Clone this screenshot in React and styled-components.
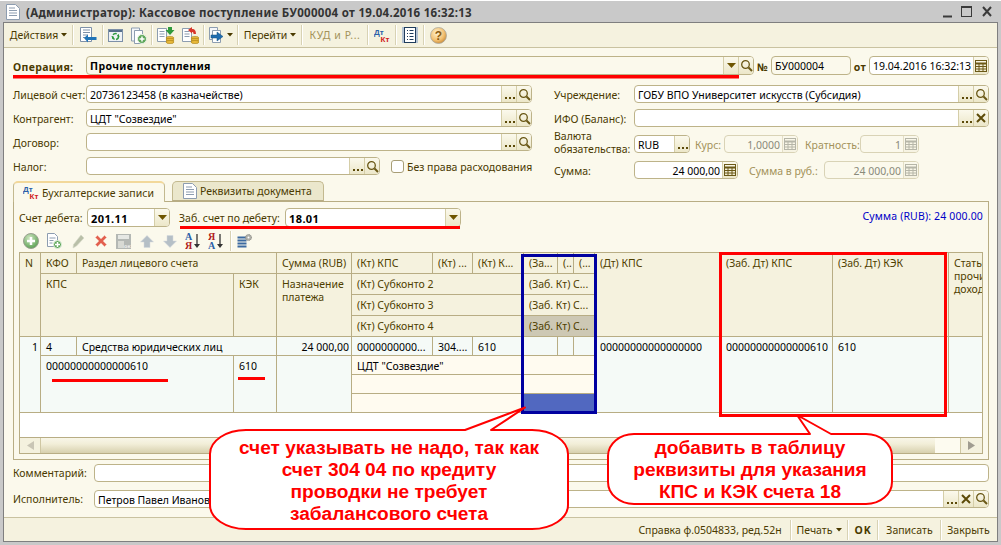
import React from 'react';
import styled, { createGlobalStyle } from 'styled-components';

const Global = createGlobalStyle`
  html, body { margin: 0; padding: 0; background: #fff; }
  body { font-family: "Noto Sans", "DejaVu Sans", sans-serif; font-size: 10.5px; color: #4a3a00; }
  * { box-sizing: border-box; }
`;

const Screen = styled.div`
  position: relative; width: 1001px; height: 545px; overflow: hidden;
  background: #c9c9c9; margin-top: 0; padding: 1px 3px 3px 3px; display: flex; flex-direction: column;
  border-top: 1px solid #fff;
`;
const TitleBar = styled.div`
  height: 20px; flex: none; display: flex; align-items: center; padding-left: 3px; gap: 6px;
  color: #333; font-weight: bold; font-size: 11.5px; letter-spacing: 0.29px; white-space: nowrap;
`;
const TitleText = styled.span`flex: 1;`;
const WinButtons = styled.div`display: flex; align-items: center; width: 55px; flex: none;`;
const Window = styled.div`
  flex: 1; border: 1px solid #7f7f7f; display: flex; flex-direction: column; background: #fbf9ec; min-height: 0;
`;
const Toolbar = styled.div`
  height: 25px; flex: none; display: flex; align-items: center; background: #f5f2df; border-bottom: 1px solid #c9c2a0; padding-left: 1px;
`;
const ToolBtn = styled.div`
  width: ${p => p.$w}px; height: 22px; flex: none; display: flex; align-items: center; justify-content: center; gap: 3px;
  white-space: nowrap; color: ${p => p.$off ? '#a3925a' : '#4a3a00'};
  letter-spacing: ${p => p.$off ? '0.6px' : 'normal'};
`;
const Sep = styled.div`
  width: 2px; height: 20px; flex: none; border-left: 1px solid #d8d2b4; border-right: 1px solid #fff;
`;
const Form = styled.div`
  flex: 1; min-height: 0; padding: 8px 8px 0 9px; display: flex; flex-direction: column;
`;
const TopRow = styled.div`display: flex; align-items: center; height: 19px; flex: none;`;
const BoldLabel = styled.span`
  font-weight: bold; white-space: nowrap; width: ${p => p.$w}px; flex: none; color: #4a3a00; margin-top: 2px; letter-spacing: 0.35px;
  text-align: ${p => p.$center ? 'center' : 'left'};
`;
const Columns = styled.div`
  display: flex; justify-content: space-between; margin-top: 10px; height: 95px; flex: none;
`;
const Col = styled.div`width: ${p => p.$w}px; display: flex; flex-direction: column; flex: none;`;
const Row = styled.div`
  display: flex; align-items: center; height: ${p => p.$h || 18}px; margin-bottom: ${p => p.$mb ?? 6}px; flex: none;
`;
const Label = styled.span`
  width: ${p => p.$w ? p.$w + 'px' : 'auto'}; flex: none; white-space: nowrap; line-height: 13px; margin-top: ${p => p.$mt ?? 2}px;
  padding-left: ${p => p.$pl || 0}px; color: ${p => p.$off ? '#a3925a' : '#4a3a00'};
`;
const FieldBox = styled.div`
  display: flex; height: ${p => p.$h || 18}px; flex: ${p => p.$w ? 'none' : 1}; width: ${p => p.$w ? p.$w + 'px' : 'auto'};
  min-width: 0; border: 1px solid ${p => p.$off ? '#d9d3b6' : '#bdb389'}; border-radius: 4px; overflow: hidden;
  background: ${p => p.$bg || '#fff'};
`;
const Value = styled.div`
  flex: 1; min-width: 0; padding: 0 ${p => p.$right ? 2 : 0}px 0 3px; white-space: nowrap; overflow: hidden;
  line-height: ${p => (p.$h || 18)}px; color: ${p => p.$off ? '#8a8a7a' : '#000'};
  font-weight: ${p => p.$bold ? 'bold' : 'normal'}; text-align: ${p => p.$right ? 'right' : 'left'};
  font-size: ${p => p.$size || 10.5}px; letter-spacing: ${p => p.$bold ? '0.4px' : 'normal'};
`;
const FieldBtn = styled.div`
  width: ${p => p.$w || 15}px; flex: none; border-left: 1px solid ${p => p.$off ? '#e3dec6' : '#d5cea8'};
  background: linear-gradient(#fbf9ec, ${p => p.$off ? '#f6f3e2' : '#ece7c9'});
  display: flex; align-items: center; justify-content: center;
`;
const Check = styled.span`
  width: 13px; height: 13px; flex: none; background: #fff; border: 1px solid #a89e76; border-radius: 3px; margin: 0 3px 0 11px;
`;
const Tabs = styled.div`display: flex; margin-top: 1px; height: 20px; flex: none; gap: 7px; position: relative; z-index: 1;`;
const Tab = styled.div`
  width: ${p => p.$w}px; display: flex; align-items: center; gap: 3px; padding-left: ${p => p.$active ? 9 : 10}px;
  height: ${p => p.$active ? 21 : 20}px; white-space: nowrap; color: #4a3a00;
  border: 1px solid #c3b98f; border-bottom: ${p => p.$active ? 'none' : '1px solid #b8ad84'}; border-radius: 5px 5px 0 0;
  background: ${p => p.$active ? '#fbf9ec' : '#ebe7cc'};
  ${p => p.$active ? 'border-top: 2px solid #f2d89a;' : ''}
`;
const Panel = styled.div`
  height: 259px; flex: none; border: 1px solid #b8ad84; margin-left: 0; padding: 6px 5px 0 5px; display: flex; flex-direction: column;
`;
const FilterRow = styled.div`display: flex; align-items: center; height: 19px; flex: none;`;
const Spacer = styled.div`flex: 1;`;
const BlueSum = styled.span`color: #0000c8; white-space: nowrap; position: relative; top: -2px; letter-spacing: 0.15px;`;
const SubToolbar = styled.div`display: flex; align-items: center; margin-top: 5px; height: 18px; flex: none;`;
const SubBtn = styled.div`
  width: ${p => p.$w}px; flex: none; height: 18px; display: flex; align-items: center; justify-content: center;
`;
const Table = styled.div`
  margin-top: 2px; width: 964px; height: 202px; flex: none; border: 1px solid #b8ad84; background: #fff; display: flex; flex-direction: column;
`;
const Grid = styled.div`
  display: grid; flex: none;
  grid-template-columns: 21px 36px 157px 43px 75px 81px 40px 51px 34px 16px 21px 126px 112px 116px 33px;
  grid-template-rows: 21px 21px 21px 21px 19px 19px 19px 19px;
`;
const Cell = styled.div`
  grid-column: ${p => p.$c}; grid-row: ${p => p.$r};
  border-right: ${p => p.$last ? 'none' : '1px solid #b8ad84'}; border-bottom: 1px solid #b8ad84;
  padding: ${p => p.$pad ? '0 2px 0 5px' : 0}; white-space: nowrap; overflow: hidden;
  line-height: ${p => p.$lh || 21}px; min-width: 0;
  background: ${p => p.$bg || '#f5f2de'}; color: ${p => p.$dark ? '#000' : '#4f4000'};
  text-align: ${p => p.$right ? 'right' : 'left'};
`;
const Blank = styled.div`flex: 1; background: #fff; border-bottom: 1px solid #b8ad84;`;
const Scroll = styled.div`height: 15px; flex: none; display: flex;`;
const ScrollBtn = styled.div`
  width: ${p => p.$w}px; flex: none; display: flex; align-items: center; justify-content: center; background: #f4f1de;
  border-${p => p.$side}: 1px solid #cfc7a3;
`;
const ScrollTrack = styled.div`flex: 1; background: linear-gradient(#f8f6e8, #f2eed8 40%, #d7d0ae);`;
const ScrollGap = styled.div`width: 25px; flex: none; background: #fdfbf0;`;
const BottomRow = styled.div`
  display: flex; align-items: center; height: 19px; flex: none; margin-top: ${p => p.$mt}px;
`;
const StatusBar = styled.div`
  height: 24px; flex: none; border-top: 1px solid #c9c2a0; background: #f5f2df; display: flex; align-items: center; justify-content: flex-end; padding-right: 2px; white-space: nowrap;
`;
const StatusItem = styled.div`
  width: ${p => p.$w}px; flex: none; display: flex; align-items: center; justify-content: center; gap: 4px;
  font-weight: ${p => p.$bold ? 'bold' : 'normal'}; letter-spacing: ${p => p.$bold ? '0.8px' : 'normal'};
`;
const Overlay = styled.svg`position: absolute; left: 0; top: 0; pointer-events: none;`;
const Bubble = styled.div`
  position: absolute; left: ${p => p.$x}px; top: ${p => p.$y}px; width: ${p => p.$w}px; text-align: center;
  font-family: "Liberation Sans", Arial, sans-serif; font-weight: bold; font-size: 19.1px; line-height: 22px; color: #f00; white-space: nowrap;
`;
const TopGap = styled.div`height: 4px;`;

const Dots = () => (
  <svg width="11" height="12" viewBox="0 0 11 12"><path d="M1 9h2v2H1zM5 9h2v2H5zM9 9h2v2H9z" fill="#5c4a08" /></svg>
);
const Search = () => (
  <svg width="13" height="13" viewBox="0 0 13 13" fill="none" stroke="#6a5816"><circle cx="5.500" cy="5.500" r="3.800" strokeWidth="1.300" /><path d="M8.500 8.500l3.500 3.500" strokeWidth="2" /></svg>
);
const Drop = () => (
  <svg width="9" height="6" viewBox="0 0 9 6"><path d="M0 0h9L4.500 5z" fill="#6e5500" /></svg>
);
const Cross = () => (
  <svg width="10" height="10" viewBox="0 0 10 10" stroke="#5c4a08" strokeWidth="2"><path d="M1 1l8 8M9 1l-8 8" /></svg>
);
const Calc = ({ off }) => {
  const c = off ? '#b6b6a8' : '#6a5816';
  return (
    <svg width="12" height="12" viewBox="0 0 12 12" fill="none" stroke={c}><rect x=".5" y=".5" width="11" height="11" /><path d="M.5 3.500h11" strokeWidth="2" /><path d="M.5 6.500h11M.5 9h11M4 3v8.500M8 3v8.500" /></svg>
  );
};
const ICONS = { dots: Dots, search: Search, drop: Drop, x: Cross };
const Field = ({ w, h, bg, off, bold, right, size, btns = [], children }) => (
  <FieldBox $w={w} $h={h} $bg={bg} $off={off}>
    <Value $h={h} $off={off} $bold={bold} $right={right} $size={size}>{children}</Value>
    {btns.map((b, i) => {
      if (b === 'calc') return <FieldBtn key={i} $off={off}><Calc off={off} /></FieldBtn>;
      const I = ICONS[b];
      return <FieldBtn key={i}><I /></FieldBtn>;
    })}
  </FieldBox>
);

const MenuDrop = () => <svg width="6" height="4" viewBox="0 0 6 4"><path d="M0 0h6L3 3.500z" fill="#4a3a00" /></svg>;

const DocIcon = () => (
  <svg width="14" height="16" viewBox="0 0 14 16"><path d="M.5.5h9l4 4v11H.5z" fill="#fff" stroke="#8d9db0" /><path d="M3 4h6M3 6.500h8M3 9h8M3 11.500h8" stroke="#8d9db0" /></svg>
);
const DtKt = () => (
  <svg width="16" height="15" viewBox="0 0 16 15" fontFamily="'Liberation Sans', sans-serif" fontWeight="bold" fontSize="8">
    <text x="0" y="7" fill="#2a5fa8">Дт</text><text x="6.500" y="14" fill="#d02020">Кт</text>
  </svg>
);
const IcoBack = () => (
  <svg width="17" height="16" viewBox="0 0 17 16"><path d="M.5.5h11v14H.5z" fill="#fff" stroke="#7d90a8" /><path d="M3 3h7M3 5.500h7M3 8h5M3 10.500h3" stroke="#7d90a8" /><path d="M4 11l4-3.500V10h8.500v3H8v2.500z" fill="#1f74b8" /></svg>
);
const IcoRefresh = () => (
  <svg width="15" height="13" viewBox="0 0 15 13"><rect x=".5" y=".5" width="14" height="12" fill="#eef2f6" stroke="#7d90a8" /><path d="M1 1h13v2H1z" fill="#55708c" /><circle cx="7.500" cy="7.500" r="3" fill="none" stroke="#2c9a3c" strokeWidth="1.500" strokeDasharray="4 1.500" /><path d="M10.500 5l1 3-2.500-1zM4.500 10l-1-3 2.500 1z" fill="#2c9a3c" /></svg>
);
const IcoCopyAdd = () => (
  <svg width="16" height="17" viewBox="0 0 16 17"><path d="M.5 1h8v13H.5z" fill="#f4f6f9" stroke="#8d9db0" /><path d="M3.500 3.500h8v13h-8z" fill="#fff" stroke="#8d9db0" /><circle cx="11" cy="12" r="4.500" fill="#5fa75a" stroke="#e8f2e4" /><path d="M11 9.500v5M8.500 12h5" stroke="#fff" strokeWidth="1.500" /></svg>
);
const Coins = () => (
  <g><ellipse cx="13" cy="11" rx="4" ry="1.600" fill="#e8b93a" stroke="#a67c10" strokeWidth=".6" /><ellipse cx="13" cy="13" rx="4" ry="1.600" fill="#e8b93a" stroke="#a67c10" strokeWidth=".6" /><ellipse cx="13" cy="15" rx="4" ry="1.600" fill="#e8b93a" stroke="#a67c10" strokeWidth=".6" /></g>
);
const IcoDocDown = () => (
  <svg width="18" height="17" viewBox="0 0 18 17"><path d="M.5 1.500h9v13h-9z" fill="#fff" stroke="#8d9db0" /><path d="M2.500 4.500h5M2.500 7h5M2.500 9.500h5" stroke="#8d9db0" /><path d="M11 0h4v3h2.500L13 8 8.500 3H11z" fill="#2f9a3c" /><Coins /></svg>
);
const IcoDocBack = () => (
  <svg width="17" height="17" viewBox="0 0 17 17"><path d="M.5 1.500h9v13h-9z" fill="#fff" stroke="#8d9db0" /><path d="M2.500 4.500h5M2.500 7h5M2.500 9.500h5" stroke="#8d9db0" /><path d="M6 3l4-3v2c3 0 4 2 4 5h-2.500c0-1.500-.5-2-1.500-2v1.500z" fill="#d8352a" /><Coins /></svg>
);
const IcoCopies = () => (
  <svg width="15" height="16" viewBox="0 0 15 16"><path d="M.5.5h8v12h-8z" fill="#f4f6f9" stroke="#8d9db0" /><path d="M3.500 3.500h8v12h-8z" fill="#fff" stroke="#8d9db0" /><path d="M2 8h6V5l6 4.500L8 14v-3H2z" fill="#1f6cb0" stroke="#14507f" strokeWidth=".5" /></svg>
);
const IcoReport = () => (
  <svg width="16" height="16" viewBox="0 0 16 16"><rect x="0" y="0" width="16" height="16" fill="#b4c2d2" /><rect x="2.500" y=".5" width="11" height="15" fill="#fff" stroke="#1f3c5c" /><path d="M5 3.500h1M7.500 3.500h4M5 6.500h1M7.500 6.500h4M5 9.500h1M7.500 9.500h4M5 12.500h1M7.500 12.500h4" stroke="#1f3c5c" /></svg>
);
const IcoHelp = () => (
  <svg width="17" height="17" viewBox="0 0 17 17">
    <defs><radialGradient id="hg" cx=".4" cy=".35" r=".75"><stop offset="0" stopColor="#fff3d0" /><stop offset=".6" stopColor="#f2c070" /><stop offset="1" stopColor="#c07d28" /></radialGradient></defs>
    <circle cx="8.500" cy="8.500" r="8" fill="url(#hg)" stroke="#a8a8a0" strokeWidth=".8" />
    <text x="8.500" y="13" textAnchor="middle" fontFamily="'Liberation Sans', sans-serif" fontWeight="bold" fontSize="12" fill="#8a5a10">?</text>
  </svg>
);
const Add = () => (
  <svg width="16" height="16" viewBox="0 0 16 16"><defs><radialGradient id="ag" cx=".4" cy=".3" r=".8"><stop offset="0" stopColor="#cfe6c0" /><stop offset="1" stopColor="#4f9a48" /></radialGradient></defs><circle cx="8" cy="8" r="7.500" fill="url(#ag)" stroke="#9a9f90" /><path d="M8 4v8M4 8h8" stroke="#fff" strokeWidth="2.500" /></svg>
);
const CopyDoc = () => (
  <svg width="15" height="16" viewBox="0 0 15 16"><path d="M.5.5h7l3 3v10h-10z" fill="#fff" stroke="#8d9db0" /><path d="M2.500 5h6M2.500 7.500h4M2.500 10h3" stroke="#8d9db0" /><circle cx="10.500" cy="11.500" r="4" fill="#5fa75a" stroke="#e8f2e4" /><path d="M10.500 9v5M8 11.500h5" stroke="#fff" strokeWidth="1.500" /></svg>
);
const Pencil = () => (
  <svg width="13" height="15" viewBox="0 0 13 15"><path d="M9 1l3 3-7.500 8L1 14l.5-3.500z" fill="#b9bfa8" stroke="#d5d8c8" strokeWidth=".6" /></svg>
);
const RedX = () => (
  <svg width="14" height="14" viewBox="0 0 14 14"><path d="M1.500 3.500l2-2L7 5l3.500-3.500 2 2L9 7l3.500 3.500-2 2L7 9l-3.500 3.500-2-2L5 7z" fill="#e2604e" stroke="#f2b2a6" strokeWidth=".6" /></svg>
);
const SaveOk = () => (
  <svg width="15" height="15" viewBox="0 0 15 15"><rect width="15" height="15" fill="#b4b8b4" /><rect x="2" y="1" width="11" height="4" fill="#e6e8e4" /><rect x="2" y="7" width="6" height="7" fill="#d8dad4" />
    <text x="8" y="14" fontFamily="'DejaVu Sans', sans-serif" fontWeight="bold" fontSize="5" fill="#ededea">ок</text></svg>
);
const Up = () => (
  <svg width="14" height="13" viewBox="0 0 14 13"><path d="M7 .5l6.500 6.500H10v5.500H4V7H.5z" fill="#b5bfc6" stroke="#d5dade" strokeWidth=".5" /></svg>
);
const Down = () => (
  <svg width="14" height="13" viewBox="0 0 14 13"><path d="M7 12.500L13.500 6H10V.5H4V6H.5z" fill="#b5bfc6" stroke="#d5dade" strokeWidth=".5" /></svg>
);
const Sort = ({ top, bottom, c1, c2 }) => (
  <svg width="16" height="18" viewBox="0 0 16 18" fontFamily="'Liberation Serif', serif" fontWeight="bold" fontSize="10">
    <text x="0" y="8" fill={c1}>{top}</text><text x="0" y="17" fill={c2}>{bottom}</text>
    <path d="M12 2v11" stroke="#333" strokeWidth="1.300" /><path d="M9 12h6l-3 4z" fill="#333" />
  </svg>
);
const Gears = () => (
  <svg width="16" height="15" viewBox="0 0 16 15"><path d="M.5 3.500h9M.5 6.500h9M.5 9.500h9M.5 12.500h9" stroke="#3c6aa0" strokeWidth="2" /><circle cx="11.500" cy="3.500" r="3" fill="#b0b0a8" stroke="#8a8a84" strokeDasharray="1 .6" /><circle cx="11.500" cy="3.500" r="1" fill="#fff" /></svg>
);
const ArrowSmall = ({ left }) => (
  <svg width="7" height="9" viewBox="0 0 7 9"><path d={left ? 'M7 0v9L0 4.500z' : 'M0 0v9l7-4.500z'} fill={left ? '#c9c5b5' : '#a09c90'} /></svg>
);

export default function App() {
  return (
    <Screen>
      <Global />
      <TitleBar>
        <DocIcon />
        <TitleText>(Администратор): Кассовое поступление БУ000004 от 19.04.2016 16:32:13</TitleText>
        <WinButtons>
          <svg width="55" height="12" viewBox="0 0 55 12" fill="none" stroke="#3a3a3a"><path d="M0 10.500h9" strokeWidth="2" /><rect x="18.500" y=".5" width="10" height="10" /><path d="M18 1h11" strokeWidth="2" /><path d="M40 1l8 9M48 1l-8 9" strokeWidth="2" /></svg>
        </WinButtons>
      </TitleBar>
      <Window>
        <Toolbar>
          <ToolBtn $w={67}>Действия <MenuDrop /></ToolBtn><Sep />
          <ToolBtn $w={28}><IcoBack /></ToolBtn><Sep />
          <ToolBtn $w={22}><IcoRefresh /></ToolBtn>
          <ToolBtn $w={25}><IcoCopyAdd /></ToolBtn><Sep />
          <ToolBtn $w={25}><IcoDocDown /></ToolBtn>
          <ToolBtn $w={25}><IcoDocBack /></ToolBtn><Sep />
          <ToolBtn $w={32}><IcoCopies /><MenuDrop /></ToolBtn><Sep />
          <ToolBtn $w={62}>Перейти <MenuDrop /></ToolBtn><Sep />
          <ToolBtn $w={64} $off>КУД и Р...</ToolBtn><Sep />
          <ToolBtn $w={26}><DtKt /></ToolBtn><Sep />
          <ToolBtn $w={26}><IcoReport /></ToolBtn><Sep />
          <ToolBtn $w={26}><IcoHelp /></ToolBtn>
        </Toolbar>
        <Form>
          <TopRow>
            <BoldLabel $w={73}>Операция:</BoldLabel>
            <Field h={19} bg="#fbf9ec" bold btns={['drop', 'search']}>Прочие поступления</Field>
            <BoldLabel $w={17} $center>№</BoldLabel>
            <Field w={80} h={19} bg="#fbf9ec">БУ000004</Field>
            <BoldLabel $w={18} $center>от</BoldLabel>
            <Field w={120} h={19} btns={['calc']}>19.04.2016 16:32:13</Field>
          </TopRow>
          <Columns>
            <Col $w={519}>
              <Row><Label $w={73}>Лицевой счет:</Label><Field btns={['dots', 'search']}>20736123458 (в казначействе)</Field></Row>
              <Row><Label $w={73}>Контрагент:</Label><Field btns={['dots', 'search']}>ЦДТ "Созвездие"</Field></Row>
              <Row><Label $w={73}>Договор:</Label><Field btns={['dots', 'search']} /></Row>
              <Row>
                <Label $w={73}>Налог:</Label>
                <Field w={294} btns={['dots', 'search']} />
                <Check /><Label>Без права расходования</Label>
              </Row>
            </Col>
            <Col $w={435}>
              <Row><Label $w={80}>Учреждение:</Label><Field btns={['dots', 'search']}>ГОБУ ВПО Университет искусств (Субсидия)</Field></Row>
              <Row $mb={8}><Label $w={80}>ИФО (Баланс):</Label><Field btns={['dots', 'x']} /></Row>
              <Row $mb={8}>
                <Label $w={80} $mt={-2}>Валюта<br />обязательства:</Label>
                <Field w={56} btns={['dots']}>RUB</Field>
                <Label $w={34} $pl={5} $off>Курс:</Label>
                <Field w={74} off bg="#fbf9ec" right btns={['calc']}>1,0000</Field>
                <Label $w={62} $pl={7} $off>Кратность:</Label>
                <Field w={59} off bg="#fbf9ec" right btns={['calc']}>1</Field>
              </Row>
              <Row $mb={0}>
                <Label $w={80}>Сумма:</Label>
                <Field w={104} right btns={['calc']}>24 000,00</Field>
                <Label $w={86} $pl={11} $off>Сумма в руб.:</Label>
                <Field w={95} off bg="#fbf9ec" right btns={['calc']}>24 000,00</Field>
              </Row>
            </Col>
          </Columns>
          <Tabs>
            <Tab $w={152} $active><DtKt />Бухгалтерские записи</Tab>
            <Tab $w={152}><DocIcon />Реквизиты документа</Tab>
          </Tabs>
          <Panel>
            <FilterRow>
              <Label $w={68}>Счет дебета:</Label>
              <Field w={83} h={19} bold size={11} btns={['drop']}>201.11</Field>
              <Label $w={115} $pl={9}>Заб. счет по дебету:</Label>
              <Field w={176} h={19} bold size={11} btns={['drop']}>18.01</Field>
              <Spacer />
              <BlueSum>Сумма (RUB): 24 000.00</BlueSum>
            </FilterRow>
            <SubToolbar>
              <SubBtn $w={24}><Add /></SubBtn>
              <SubBtn $w={23}><CopyDoc /></SubBtn>
              <SubBtn $w={24}><Pencil /></SubBtn>
              <SubBtn $w={22}><RedX /></SubBtn>
              <SubBtn $w={23}><SaveOk /></SubBtn>
              <SubBtn $w={23}><Up /></SubBtn>
              <SubBtn $w={23}><Down /></SubBtn>
              <SubBtn $w={23}><Sort top="А" bottom="Я" c1="#2a5fa8" c2="#b02020" /></SubBtn>
              <SubBtn $w={23}><Sort top="Я" bottom="А" c1="#b02020" c2="#2a5fa8" /></SubBtn>
              <SubBtn $w={8}><Sep /></SubBtn>
              <SubBtn $w={20}><Gears /></SubBtn>
            </SubToolbar>
            <Table>
              <Grid>
                <Cell $pad $c="1" $r="1 / span 4">N</Cell>
                <Cell $pad $c="2" $r="1">КФО</Cell>
                <Cell $pad $c="3 / span 2" $r="1">Раздел лицевого счета</Cell>
                <Cell $pad $c="5" $r="1">Сумма (RUB)</Cell>
                <Cell $pad $c="6" $r="1">(Кт) КПС</Cell>
                <Cell $pad $c="7" $r="1">(Кт) ...</Cell>
                <Cell $pad $c="8" $r="1">(Кт) К...</Cell>
                <Cell $pad $c="9" $r="1">(За...</Cell>
                <Cell $pad $c="10" $r="1">(..</Cell>
                <Cell $pad $c="11" $r="1">(...</Cell>
                <Cell $pad $c="12" $r="1 / span 4">(Дт) КПС</Cell>
                <Cell $pad $c="13" $r="1 / span 4">(Заб. Дт) КПС</Cell>
                <Cell $pad $c="14" $r="1 / span 4">(Заб. Дт) КЭК</Cell>
                <Cell $pad $last $lh={13} $c="15" $r="1 / span 4">
                  <TopGap />Статья<br />прочих<br />доходов
                </Cell>
                <Cell $pad $c="2 / span 2" $r="2 / span 3">КПС</Cell>
                <Cell $pad $c="4" $r="2 / span 3">КЭК</Cell>
                <Cell $pad $lh={13} $c="5" $r="2 / span 3"><TopGap />Назначение<br />платежа</Cell>
                <Cell $pad $c="6 / span 3" $r="2">(Кт) Субконто 2</Cell>
                <Cell $pad $c="9 / span 3" $r="2">(Заб. Кт) С...</Cell>
                <Cell $pad $c="6 / span 3" $r="3">(Кт) Субконто 3</Cell>
                <Cell $pad $c="9 / span 3" $r="3">(Заб. Кт) С...</Cell>
                <Cell $pad $c="6 / span 3" $r="4">(Кт) Субконто 4</Cell>
                <Cell $pad $bg="#cdc8b4" $c="9 / span 3" $r="4">(Заб. Кт) С...</Cell>

                <Cell $pad $dark $lh={20} $right $bg="#f5faf7" $c="1" $r="5 / span 4">1</Cell>
                <Cell $pad $dark $lh={20} $bg="#f5faf7" $c="2" $r="5">4</Cell>
                <Cell $pad $dark $lh={20} $bg="#f5faf7" $c="3 / span 2" $r="5">Средства юридических лиц</Cell>
                <Cell $pad $dark $lh={20} $right $bg="#f5faf7" $c="5" $r="5">24 000,00</Cell>
                <Cell $pad $dark $lh={20} $bg="#f5faf7" $c="6" $r="5">0000000000...</Cell>
                <Cell $pad $dark $lh={20} $bg="#f5faf7" $c="7" $r="5">304....</Cell>
                <Cell $pad $dark $lh={20} $bg="#f5faf7" $c="8" $r="5">610</Cell>
                <Cell $bg="#f5faf7" $c="9" $r="5" />
                <Cell $bg="#f5faf7" $c="10" $r="5" />
                <Cell $bg="#f5faf7" $c="11" $r="5" />
                <Cell $pad $dark $lh={20} $bg="#f5faf7" $c="12" $r="5 / span 4">00000000000000000</Cell>
                <Cell $pad $dark $lh={20} $bg="#f5faf7" $c="13" $r="5 / span 4">00000000000000610</Cell>
                <Cell $pad $dark $lh={20} $bg="#f5faf7" $c="14" $r="5 / span 4">610</Cell>
                <Cell $last $bg="#f5faf7" $c="15" $r="5 / span 4" />
                <Cell $pad $dark $lh={20} $bg="#f5faf7" $c="2 / span 2" $r="6 / span 3">00000000000000610</Cell>
                <Cell $pad $dark $lh={20} $bg="#f5faf7" $c="4" $r="6 / span 3">610</Cell>
                <Cell $bg="#f5faf7" $c="5" $r="6 / span 3" />
                <Cell $pad $dark $lh={20} $bg="#fffbf0" $c="6 / span 3" $r="6">ЦДТ "Созвездие"</Cell>
                <Cell $bg="#fffbf0" $c="9 / span 3" $r="6" />
                <Cell $bg="#fffbf0" $c="6 / span 3" $r="7" />
                <Cell $bg="#fffbf0" $c="9 / span 3" $r="7" />
                <Cell $bg="#fffbf0" $c="6 / span 3" $r="8" />
                <Cell $bg="#5168c0" $c="9 / span 3" $r="8" />
              </Grid>
              <Blank />
              <Scroll>
                <ScrollBtn $w={21} $side="right"><ArrowSmall left /></ScrollBtn>
                <ScrollTrack />
                <ScrollGap />
                <ScrollBtn $w={22} $side="left"><ArrowSmall /></ScrollBtn>
              </Scroll>
            </Table>
          </Panel>
          <BottomRow $mt={3}>
            <Label $w={81}>Комментарий:</Label>
            <Field />
          </BottomRow>
          <BottomRow $mt={7}>
            <Label $w={81}>Исполнитель:</Label>
            <Field btns={['dots', 'x', 'search']}>Петров Павел Иванович</Field>
          </BottomRow>
        </Form>
        <StatusBar>
          <StatusItem $w={160}>Справка ф.0504833, ред.52н</StatusItem><Sep />
          <StatusItem $w={55}>Печать <MenuDrop /></StatusItem><Sep />
          <StatusItem $w={28} $bold>OK</StatusItem><Sep />
          <StatusItem $w={61}>Записать</StatusItem><Sep />
          <StatusItem $w={53}>Закрыть</StatusItem>
        </StatusBar>
      </Window>
      <Overlay width="1001" height="545" viewBox="0 0 1001 545" fill="none">
        <g fill="#f00">
          <rect x="13" y="74" width="726" height="3.500" />
          <rect x="180" y="225" width="280" height="3" />
          <rect x="52" y="378" width="116" height="3" />
          <rect x="238" y="376" width="27" height="3" />
        </g>
        <rect x="522.500" y="254.500" width="73" height="157" stroke="#0000a0" strokeWidth="3" />
        <rect x="720.500" y="252.500" width="225" height="162" stroke="#f00" strokeWidth="3" />
        <g fill="#fff" stroke="#f00" strokeWidth="2" strokeLinejoin="round">
          <path d="M246 429L465 429L525 406.500L491 429L532 429A36 24 0 0 1 568 453L568 504A36 24 0 0 1 532 528L246 528A36 24 0 0 1 210 504L210 453A36 24 0 0 1 246 429Z" />
          <path d="M634 433L810 433L797 414L831 433L866 433A26 22 0 0 1 892 455L892 481A26 22 0 0 1 866 503L634 503A26 22 0 0 1 608 481L608 455A26 22 0 0 1 634 433Z" />
        </g>
      </Overlay>
      <Bubble $x={210} $y={436} $w={358}>счет указывать не надо, так как<br />счет 304 04 по кредиту<br />проводки не требует<br />забалансового счета</Bubble>
      <Bubble $x={608} $y={436} $w={284}>добавить в таблицу<br />реквизиты для указания<br />КПС и КЭК счета 18</Bubble>
    </Screen>
  );
}
